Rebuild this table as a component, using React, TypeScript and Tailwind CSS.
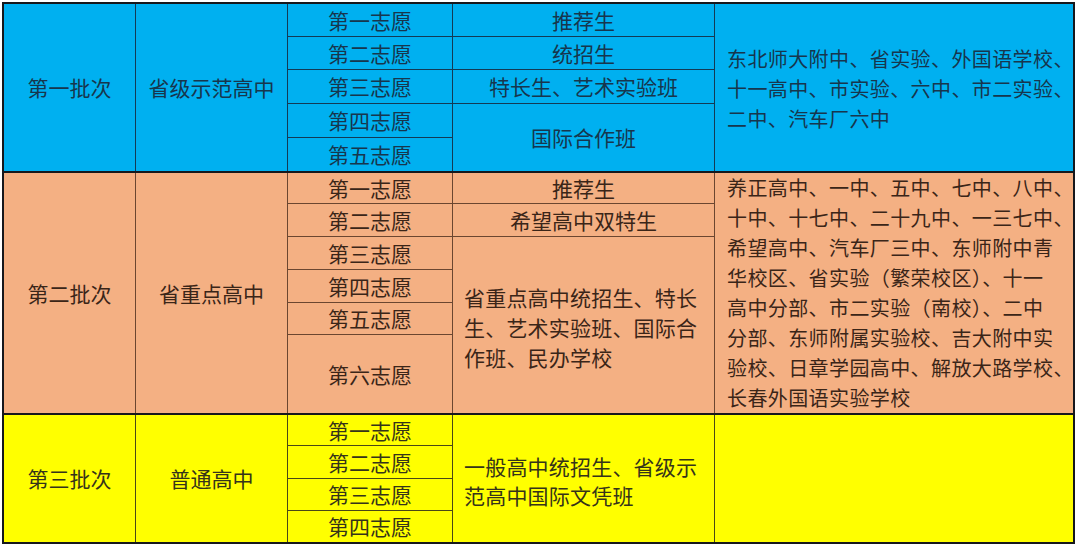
import React from "react";

const font = "font-['Noto_Sans_CJK_SC','Noto_Sans',sans-serif]";
const cols = "grid grid-cols-[131px_151px_164px_261px_358px] gap-px";

function C({ className = "", children }: { className?: string; children?: React.ReactNode }) {
  return <div className={"flex items-center justify-center text-[21px] leading-none " + className}>{children}</div>;
}

function Lines({ lines, className = "" }: { lines: string[]; className?: string }) {
  return (
    <div className={"flex flex-col items-start justify-center whitespace-nowrap " + className}>
      {lines.map((l) => (
        <span key={l}>{l}</span>
      ))}
    </div>
  );
}

export default function App() {
  return (
    <div className={"min-h-[548px] bg-white pl-[2px] pt-[2px] " + font}>
      <div className="flex w-[1073px] flex-col gap-[2px] bg-[#16181c] p-[2px]">
        {/* 第一批次 */}
        <div className={cols + " grid-rows-[32px_32px_33px_33px_33px] bg-[#133a55] text-[#17364d]"}>
          <C className="row-span-5 bg-[#00b0f0]">第一批次</C>
          <C className="row-span-5 bg-[#00b0f0]">省级示范高中</C>
          <C className="bg-[#00b0f0]">第一志愿</C>
          <C className="bg-[#00b0f0]">推荐生</C>
          <Lines
            className="row-span-5 bg-[#00b0f0] pl-[12px] pt-[3px] text-[20px] leading-[30px] tracking-[0.4px]"
            lines={["东北师大附中、省实验、外国语学校、", "十一高中、市实验、六中、市二实验、", "二中、汽车厂六中"]}
          />
          <C className="bg-[#00b0f0]">第二志愿</C>
          <C className="bg-[#00b0f0]">统招生</C>
          <C className="bg-[#00b0f0]">第三志愿</C>
          <C className="bg-[#00b0f0]">特长生、艺术实验班</C>
          <C className="bg-[#00b0f0]">第四志愿</C>
          <C className="row-span-2 bg-[#00b0f0]">国际合作班</C>
          <C className="bg-[#00b0f0]">第五志愿</C>
        </div>

        {/* 第二批次 */}
        <div className={cols + " grid-rows-[30px_32px_32px_32px_31px_78px] bg-[#6b4630] text-[#3a2518]"}>
          <C className="row-span-6 bg-[#f4b083]">第二批次</C>
          <C className="row-span-6 bg-[#f4b083]">省重点高中</C>
          <C className="bg-[#f4b083]">第一志愿</C>
          <C className="bg-[#f4b083]">推荐生</C>
          <Lines
            className="row-span-6 bg-[#f4b083] pl-[12px] text-[20px] leading-[30px] tracking-[0.4px]"
            lines={[
              "养正高中、一中、五中、七中、八中、",
              "十中、十七中、二十九中、一三七中、",
              "希望高中、汽车厂三中、东师附中青",
              "华校区、省实验（繁荣校区）、十一",
              "高中分部、市二实验（南校）、二中",
              "分部、东师附属实验校、吉大附中实",
              "验校、日章学园高中、解放大路学校、",
              "长春外国语实验学校",
            ]}
          />
          <C className="bg-[#f4b083]">第二志愿</C>
          <C className="bg-[#f4b083]">希望高中双特生</C>
          <C className="bg-[#f4b083]">第三志愿</C>
          <Lines
            className="row-span-4 bg-[#f4b083] pl-[11px] pt-[4px] text-[21px] leading-[30px] tracking-[0.2px]"
            lines={["省重点高中统招生、特长", "生、艺术实验班、国际合", "作班、民办学校"]}
          />
          <C className="bg-[#f4b083]">第四志愿</C>
          <C className="bg-[#f4b083]">第五志愿</C>
          <C className="bg-[#f4b083]">第六志愿</C>
        </div>

        {/* 第三批次 */}
        <div className={cols + " grid-rows-[30px_32px_31px_31px] bg-[#4a4716] text-[#35331a]"}>
          <C className="row-span-4 bg-[#ffff00]">第三批次</C>
          <C className="row-span-4 bg-[#ffff00]">普通高中</C>
          <C className="bg-[#ffff00]">第一志愿</C>
          <Lines
            className="row-span-4 bg-[#ffff00] pl-[11px] pt-[4px] text-[21px] leading-[29px] tracking-[0.2px]"
            lines={["一般高中统招生、省级示", "范高中国际文凭班"]}
          />
          <div className="row-span-4 bg-[#ffff00]" />
          <C className="bg-[#ffff00]">第二志愿</C>
          <C className="bg-[#ffff00]">第三志愿</C>
          <C className="bg-[#ffff00]">第四志愿</C>
        </div>
      </div>
    </div>
  );
}
